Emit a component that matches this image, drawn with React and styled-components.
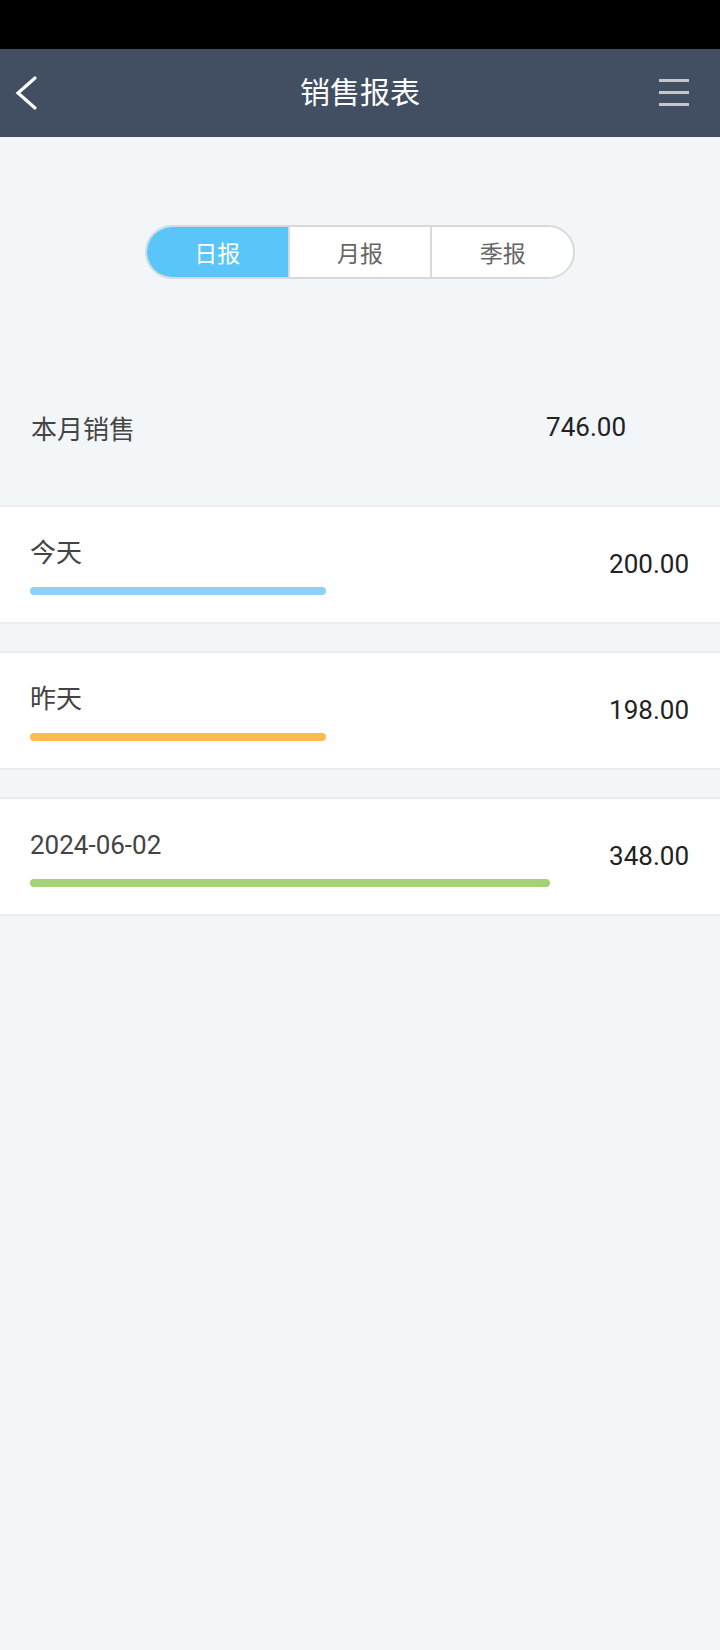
import React, { useState } from "react";
import styled, { createGlobalStyle } from "styled-components";

const GlobalStyle = createGlobalStyle`
  html, body { margin: 0; padding: 0; }
  body {
    background: #f3f6f9;
    font-family: Roboto, "Noto Sans CJK SC", "Noto Sans", sans-serif;
    -webkit-font-smoothing: antialiased;
  }
`;

const Page = styled.div`
  min-height: 1650px;
  background: #f3f6f9;
  display: flex;
  flex-direction: column;
`;

const StatusBar = styled.div`
  height: 49px;
  background: #000;
`;

const Header = styled.header`
  height: 88px;
  background: #424f63;
  display: grid;
  grid-template-columns: 1fr auto 1fr;
  align-items: center;
`;

const BackButton = styled.button`
  justify-self: start;
  margin-left: 14px;
  padding: 0;
  border: 0;
  background: none;
  display: flex;
  cursor: pointer;
`;

const MenuButton = styled(BackButton)`
  justify-self: end;
  margin-left: 0;
  margin-right: 31px;
`;

const Title = styled.h1`
  margin: 0;
  color: #fff;
  font-size: 30px;
  font-weight: 400;
  line-height: 40px;
`;

const SegmentWrap = styled.div`
  display: flex;
  justify-content: center;
  padding-top: 88px;
`;

const Segmented = styled.div`
  width: 430px;
  height: 54px;
  box-sizing: border-box;
  border: 2px solid #d6dadd;
  border-radius: 27px;
  overflow: hidden;
  display: flex;
  background: #fff;
`;

const Segment = styled.button`
  flex: 1;
  border: 0;
  border-left: ${(p) => (p.$first ? "0" : "2px solid #d6dadd")};
  background: ${(p) => (p.$active ? "#5ac5f8" : "#fff")};
  color: ${(p) => (p.$active ? "#fff" : "#666")};
  font-family: inherit;
  font-size: 23px;
  padding: 0;
  cursor: pointer;
`;

const Summary = styled.div`
  margin-top: 98px;
  margin-bottom: 28px;
  height: 100px;
  padding: 0 94px 0 31px;
  display: flex;
  align-items: center;
  justify-content: space-between;
`;

const SummaryLabel = styled.span`
  font-size: 26px;
  color: #444;
`;

const Amount = styled.span`
  font-size: 26px;
  color: #222;
  font-family: Roboto, sans-serif;
`;

const CardAmount = styled(Amount)`
  margin-bottom: 6px;
`;

const List = styled.div`
  display: flex;
  flex-direction: column;
  gap: 27px;
`;

const Card = styled.div`
  background: #fff;
  border-top: 2px solid #eaedf0;
  border-bottom: 2px solid #eaedf0;
  padding: 31px 31px 27px 30px;
  display: flex;
  align-items: center;
  justify-content: space-between;
`;

const CardMain = styled.div`
  display: flex;
  flex-direction: column;
  gap: 19px;
`;

const CardLabel = styled.span`
  font-size: 26px;
  line-height: 30px;
  color: #444;
`;

const Bar = styled.div`
  height: 8px;
  border-radius: 4px;
  background: ${(p) => p.$color};
`;

const rows = [
  { label: "今天", value: 200, width: 296, color: "#8fd0fb" },
  { label: "昨天", value: 198, width: 296, color: "#ffbb4f" },
  { label: "2024-06-02", value: 348, width: 520, color: "#a3d374" },
];

export default function App() {
  const [tab, setTab] = useState(0);
  const tabs = ["日报", "月报", "季报"];
  return (
    <Page>
      <GlobalStyle />
      <StatusBar />
      <Header>
        <BackButton aria-label="返回">
          <svg width="24" height="36" viewBox="0 0 24 36">
            <polyline
              points="21,3 4,18 21,33"
              fill="none"
              stroke="#fff"
              strokeWidth="3.2"
              strokeLinecap="round"
              strokeLinejoin="miter"
            />
          </svg>
        </BackButton>
        <Title>销售报表</Title>
        <MenuButton aria-label="菜单">
          <svg width="30" height="30" viewBox="0 0 30 30">
            <rect x="0" y="1" width="30" height="3" fill="#c3c7cd" />
            <rect x="0" y="13" width="30" height="3" fill="#c3c7cd" />
            <rect x="0" y="25" width="30" height="3" fill="#c3c7cd" />
          </svg>
        </MenuButton>
      </Header>
      <SegmentWrap>
        <Segmented>
          {tabs.map((t, i) => (
            <Segment key={t} $first={i === 0} $active={tab === i} onClick={() => setTab(i)}>
              {t}
            </Segment>
          ))}
        </Segmented>
      </SegmentWrap>
      <Summary>
        <SummaryLabel>本月销售</SummaryLabel>
        <Amount>746.00</Amount>
      </Summary>
      <List>
        {rows.map((r) => (
          <Card key={r.label}>
            <CardMain>
              <CardLabel>{r.label}</CardLabel>
              <Bar $color={r.color} style={{ width: r.width }} />
            </CardMain>
            <CardAmount>{r.value.toFixed(2)}</CardAmount>
          </Card>
        ))}
      </List>
    </Page>
  );
}
